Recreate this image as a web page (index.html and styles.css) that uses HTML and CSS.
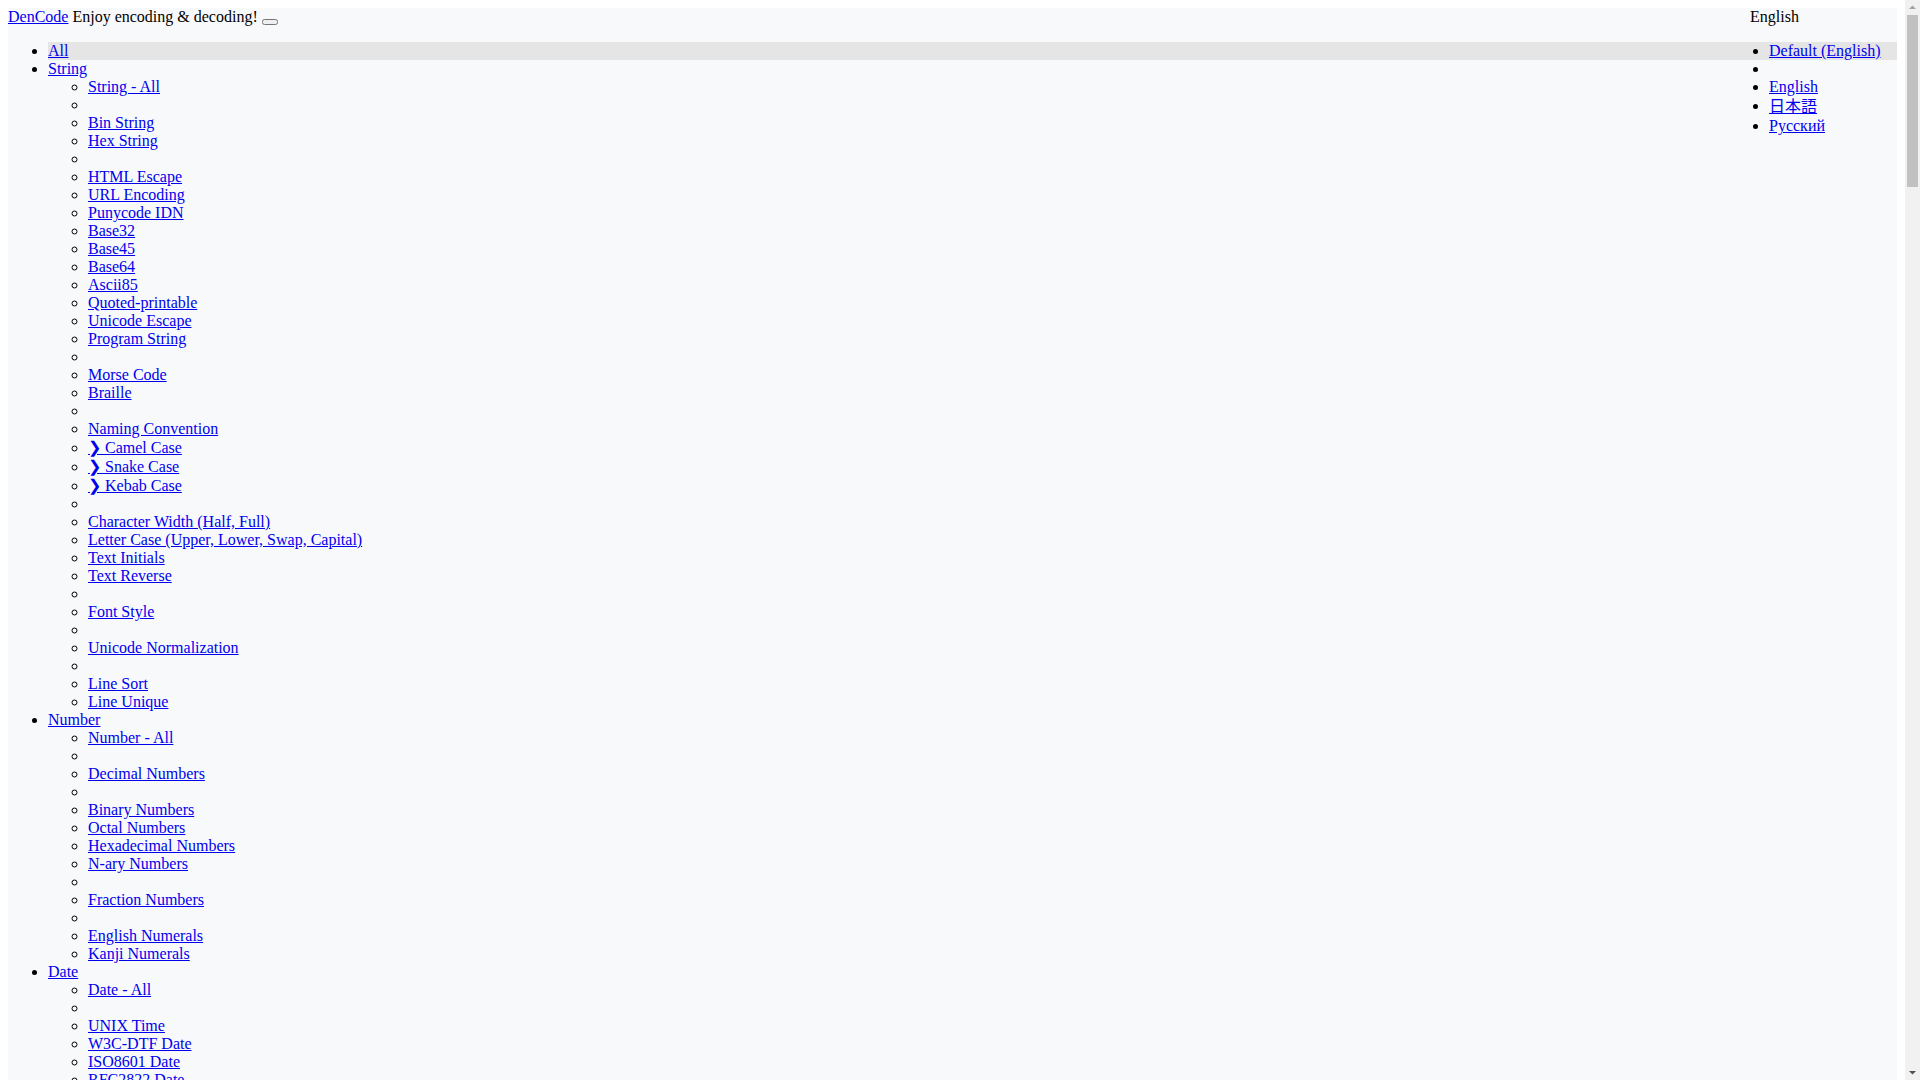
FILE: index.html
```html
<!DOCTYPE html>
<html lang="en">
<head>
<meta charset="utf-8">
<title>DenCode</title>
<link rel="stylesheet" href="styles.css">
</head>
<body>
<nav class="navbar">
  <div class="navbar-head">
    <div class="brand-line"><a href="#">DenCode</a> Enjoy encoding &amp; decoding! <button type="button"></button></div>
    <div class="lang">
      <span class="lang-toggle">English</span>
      <ul class="lang-menu">
        <li class="active"><a href="#">Default (English)</a></li>
        <li></li>
        <li><a href="#">English</a></li>
        <li><a href="#" class="cjk" lang="ja">日本語</a></li>
        <li><a href="#">Русский</a></li>
      </ul>
    </div>
  </div>
  <ul class="menu">
    <li class="active"><a href="#">All</a></li>
    <li><a href="#">String</a>
      <ul>
        <li><a href="#">String - All</a></li>
        <li></li>
        <li><a href="#">Bin String</a></li>
        <li><a href="#">Hex String</a></li>
        <li></li>
        <li><a href="#">HTML Escape</a></li>
        <li><a href="#">URL Encoding</a></li>
        <li><a href="#">Punycode IDN</a></li>
        <li><a href="#">Base32</a></li>
        <li><a href="#">Base45</a></li>
        <li><a href="#">Base64</a></li>
        <li><a href="#">Ascii85</a></li>
        <li><a href="#">Quoted-printable</a></li>
        <li><a href="#">Unicode Escape</a></li>
        <li><a href="#">Program String</a></li>
        <li></li>
        <li><a href="#">Morse Code</a></li>
        <li><a href="#">Braille</a></li>
        <li></li>
        <li><a href="#">Naming Convention</a></li>
        <li><a href="#">❯ Camel Case</a></li>
        <li><a href="#">❯ Snake Case</a></li>
        <li><a href="#">❯ Kebab Case</a></li>
        <li></li>
        <li><a href="#">Character Width (Half, Full)</a></li>
        <li><a href="#">Letter Case (Upper, Lower, Swap, Capital)</a></li>
        <li><a href="#">Text Initials</a></li>
        <li><a href="#">Text Reverse</a></li>
        <li></li>
        <li><a href="#">Font Style</a></li>
        <li></li>
        <li><a href="#">Unicode Normalization</a></li>
        <li></li>
        <li><a href="#">Line Sort</a></li>
        <li><a href="#">Line Unique</a></li>
      </ul>
    </li>
    <li><a href="#">Number</a>
      <ul>
        <li><a href="#">Number - All</a></li>
        <li></li>
        <li><a href="#">Decimal Numbers</a></li>
        <li></li>
        <li><a href="#">Binary Numbers</a></li>
        <li><a href="#">Octal Numbers</a></li>
        <li><a href="#">Hexadecimal Numbers</a></li>
        <li><a href="#">N-ary Numbers</a></li>
        <li></li>
        <li><a href="#">Fraction Numbers</a></li>
        <li></li>
        <li><a href="#">English Numerals</a></li>
        <li><a href="#">Kanji Numerals</a></li>
      </ul>
    </li>
    <li><a href="#">Date</a>
      <ul>
        <li><a href="#">Date - All</a></li>
        <li></li>
        <li><a href="#">UNIX Time</a></li>
        <li><a href="#">W3C-DTF Date</a></li>
        <li><a href="#">ISO8601 Date</a></li>
        <li><a href="#">RFC2822 Date</a></li>
        <li></li>
        <li><a href="#">Japanese Era</a></li>
      </ul>
    </li>
    <li><a href="#">Color</a>
      <ul>
        <li><a href="#">Color - All</a></li>
        <li></li>
        <li><a href="#">Color Name</a></li>
        <li><a href="#">RGB Hex</a></li>
        <li><a href="#">RGB</a></li>
        <li><a href="#">HSL</a></li>
        <li><a href="#">HWB</a></li>
        <li><a href="#">CMYK</a></li>
      </ul>
    </li>
  </ul>
</nav>
<div class="scrollbar" aria-hidden="true">
  <svg class="sb-arrow sb-up" width="15" height="15" viewBox="0 0 15 15"><polygon points="4,9 11,9 7.5,5.5" fill="#a3a3a3"/></svg>
  <div class="sb-thumb"></div>
  <svg class="sb-arrow sb-down" width="15" height="15" viewBox="0 0 15 15"><polygon points="4,6 11,6 7.5,9.5" fill="#505050"/></svg>
</div>
</body>
</html>
```
FILE: styles.css
```css
html, body {
  font-family: "Liberation Serif", serif;
  font-size: 16px;
  color: #000;
  background: #fff;
}
body {
  margin: 8px 23px 8px 8px;
}
a {
  color: #0000ee;
}
.cjk {
  font-family: "Liberation Serif", "Noto Sans CJK JP", serif;
  line-height: 21px;
  vertical-align: -1px;
}
.navbar {
  background: #f8f9fa;
  display: flow-root;
}
.navbar-head {
  display: flex;
  justify-content: space-between;
  align-items: flex-start;
}
.brand-line {
  white-space: nowrap;
}
.lang {
  position: relative;
  width: 147px;
}
.lang-menu {
  position: absolute;
  left: -21px;
  right: 0;
  top: 100%;
  margin: 16px 0 0;
  padding-left: 40px;
}
.menu {
  margin: 16px 0;
  padding-left: 40px;
}
li.active {
  background: #e5e5e5;
}
.scrollbar {
  position: fixed;
  top: 0;
  right: 0;
  width: 15px;
  height: 100vh;
  background: #f1f1f1;
}
.sb-arrow {
  position: absolute;
  left: 0;
  display: block;
}
.sb-up {
  top: 0;
}
.sb-down {
  bottom: 0;
}
.sb-thumb {
  position: absolute;
  top: 15px;
  left: 2px;
  right: 2px;
  height: 172px;
  background: #c1c1c1;
}
```
